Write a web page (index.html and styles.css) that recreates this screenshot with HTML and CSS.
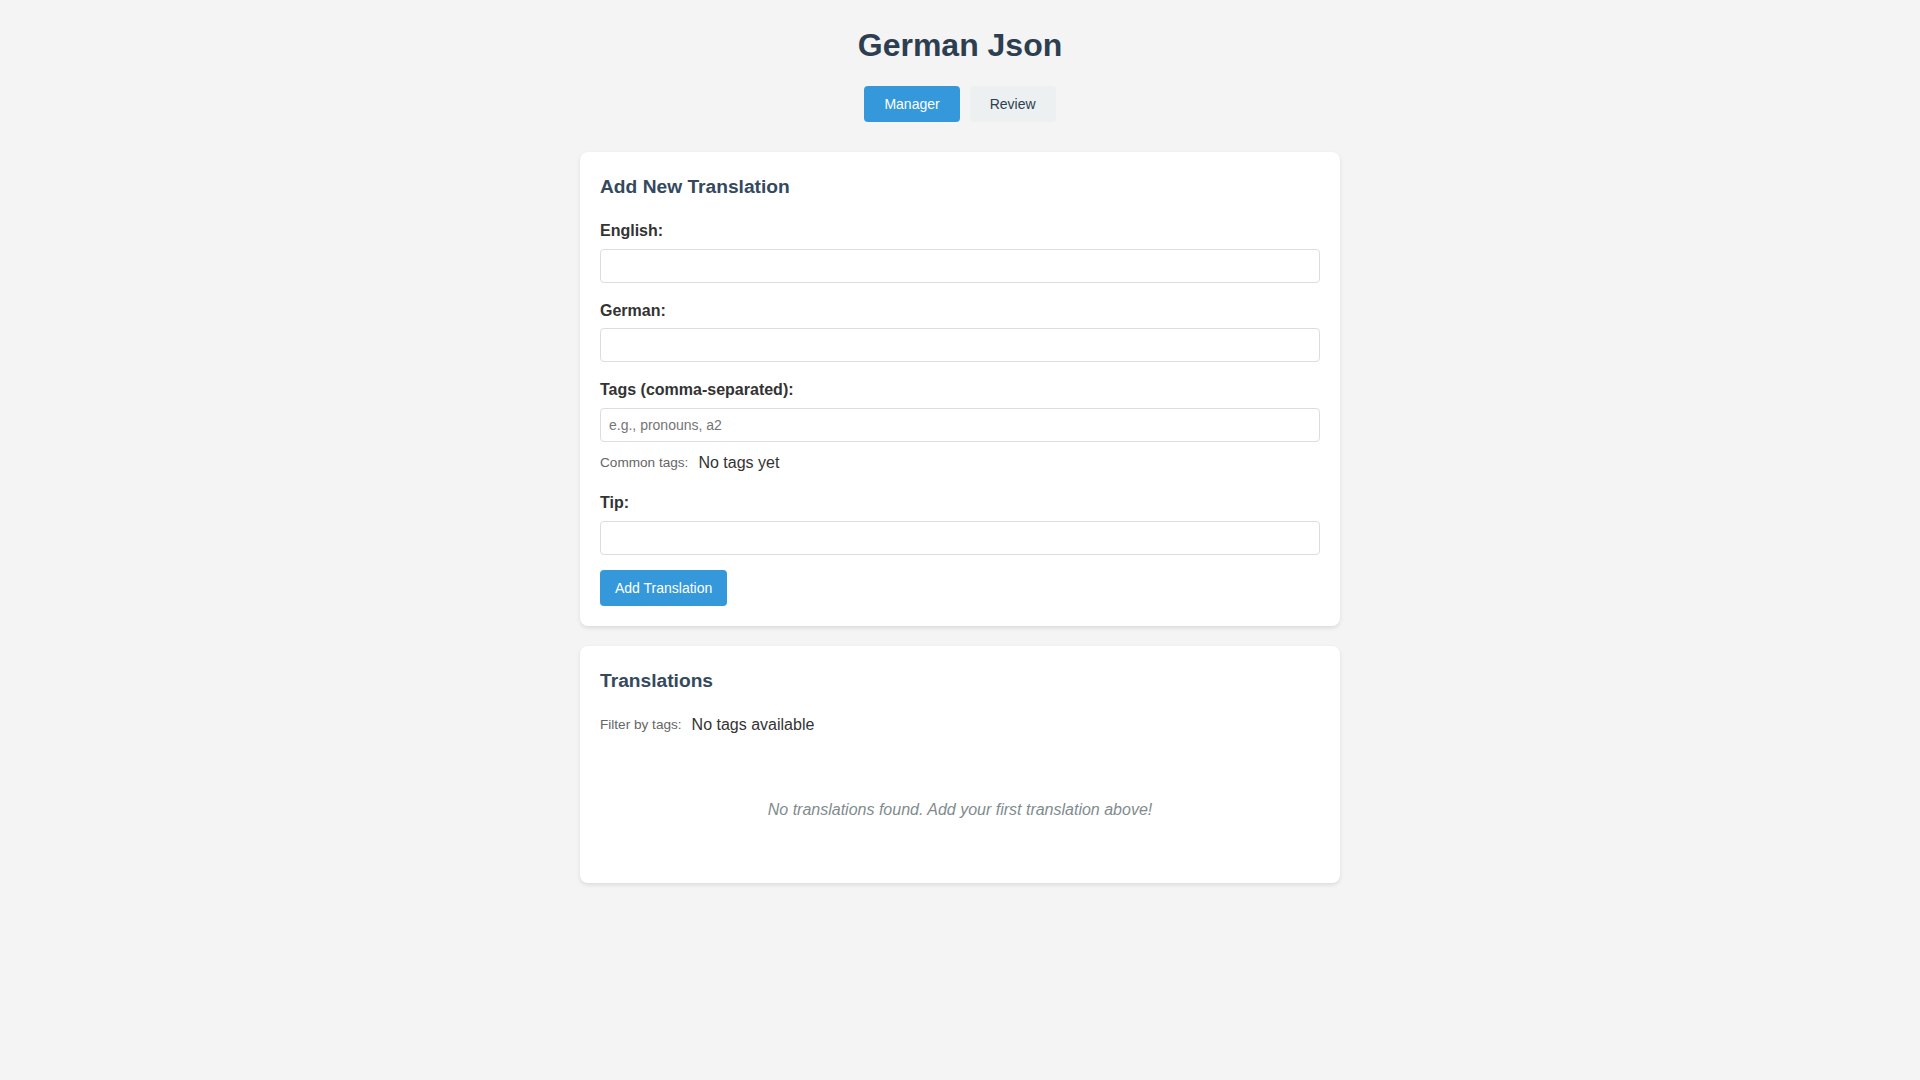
FILE: index.html
```html
<!DOCTYPE html>
<html lang="en">
<head>
<meta charset="utf-8">
<title>German Json</title>
<link rel="stylesheet" href="styles.css">
</head>
<body>
<div class="container">
  <h1 class="title">German Json</h1>
  <nav class="nav">
    <button class="nav-btn active">Manager</button>
    <button class="nav-btn">Review</button>
  </nav>

  <section class="card">
    <h2 class="card-title">Add New Translation</h2>
    <div class="form-group">
      <label class="label" for="english">English:</label>
      <input class="input" id="english" type="text">
    </div>
    <div class="form-group">
      <label class="label" for="german">German:</label>
      <input class="input" id="german" type="text">
    </div>
    <div class="form-group">
      <label class="label" for="tags">Tags (comma-separated):</label>
      <input class="input" id="tags" type="text" placeholder="e.g., pronouns, a2">
      <div class="tag-row tag-row-common">
        <span class="tag-caption">Common tags:</span>
        <span class="tag-empty">No tags yet</span>
      </div>
    </div>
    <div class="form-group">
      <label class="label" for="tip">Tip:</label>
      <input class="input" id="tip" type="text">
    </div>
    <button class="btn-primary">Add Translation</button>
  </section>

  <section class="card">
    <h2 class="card-title">Translations</h2>
    <div class="tag-row tag-row-filter">
      <span class="tag-caption">Filter by tags:</span>
      <span class="tag-empty">No tags available</span>
    </div>
    <p class="empty">No translations found. Add your first translation above!</p>
  </section>
</div>
</body>
</html>
```

FILE: styles.css
```css
* {
  box-sizing: border-box;
}

body {
  margin: 0;
  background: #f4f4f4;
  font-family: "Liberation Sans", Arial, sans-serif;
  font-size: 16px;
  line-height: 1.6;
  color: #333;
}

.container {
  max-width: 800px;
  margin: 0 auto;
  padding: 20px;
}

.title {
  margin: 0 0 15px;
  font-size: 32px;
  font-weight: bold;
  text-align: center;
  color: #2c3e50;
}

.nav {
  display: flex;
  justify-content: center;
  gap: 10px;
  margin-bottom: 30px;
}

.nav-btn {
  padding: 10px 20px;
  border: none;
  border-radius: 4px;
  background: #ecf0f1;
  color: #2c3e50;
  font-family: inherit;
  font-size: 14px;
  line-height: normal;
  cursor: pointer;
}

.nav-btn.active {
  background: #3498db;
  color: #fff;
}

.card {
  background: #fff;
  padding: 20px;
  border-radius: 8px;
  box-shadow: 0 2px 4px rgba(0, 0, 0, 0.1);
  margin-bottom: 20px;
}

.card-title {
  margin: 0 0 15px;
  font-size: 19.2px;
  font-weight: bold;
  color: #34495e;
}

.form-group {
  margin-bottom: 15px;
}

.label {
  display: block;
  margin-bottom: 5px;
  font-weight: bold;
  color: #333;
}

.input {
  display: block;
  width: 100%;
  padding: 8px;
  border: 1px solid #ddd;
  border-radius: 4px;
  font-family: inherit;
  font-size: 14px;
  line-height: normal;
  color: #333;
  background: #fff;
}

.input::placeholder {
  color: #757575;
}

.tag-row {
  display: flex;
  align-items: center;
}

.tag-row-common {
  margin-top: 8px;
}

.tag-row-filter {
  margin-bottom: 20px;
}

.tag-caption {
  font-size: 13.6px;
  color: #666;
  margin-right: 10px;
}

.tag-empty {
  font-size: 16px;
  color: #333;
}

.btn-primary {
  padding: 10px 15px;
  border: none;
  border-radius: 4px;
  background: #3498db;
  color: #fff;
  font-family: inherit;
  font-size: 14px;
  line-height: normal;
  cursor: pointer;
}

.empty {
  margin: 0;
  padding: 40px;
  text-align: center;
  font-style: italic;
  color: #7f8c8d;
}
```
